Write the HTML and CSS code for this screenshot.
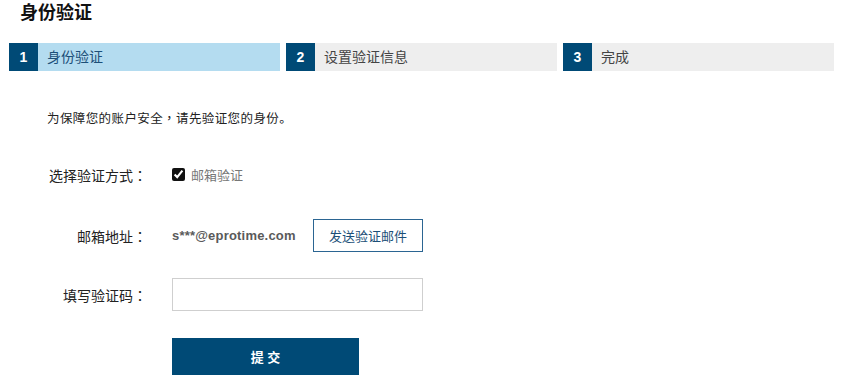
FILE: index.html
```html
<!DOCTYPE html>
<html lang="zh-CN">
<head>
  <meta charset="UTF-8" />
  <meta name="viewport" content="width=device-width, initial-scale=1.0"/>
  <title>身份验证</title>
  <link rel="stylesheet" href="styles.css">
</head>
<body>
  <h1 class="page-title">身份验证</h1>

  <div class="steps">
    <div class="step active"><span class="step-num">1</span><span class="step-name">身份验证</span></div>
    <div class="step"><span class="step-num">2</span><span class="step-name">设置验证信息</span></div>
    <div class="step"><span class="step-num">3</span><span class="step-name">完成</span></div>
  </div>

  <p class="intro">为保障您的账户安全<span class="punct" lang="zh-TW">，</span>请先验证您的身份。</p>

  <form class="verify-form" onsubmit="return false;">
    <div class="row first-row">
      <label class="row-label">选择验证方式<span class="punct" lang="zh-TW">：</span></label>
      <label class="check">
        <input type="checkbox" checked />
        <span>邮箱验证</span>
      </label>
    </div>
    <div class="row">
      <label class="row-label">邮箱地址<span class="punct" lang="zh-TW">：</span></label>
      <span class="email">s***@eprotime.com</span>
      <button type="button" class="send-btn">发送验证邮件</button>
    </div>
    <div class="row">
      <label class="row-label">填写验证码<span class="punct" lang="zh-TW">：</span></label>
      <input type="text" class="code-input" />
    </div>
    <div class="row submit-row">
      <span class="row-label"></span>
      <button type="submit" class="submit-btn">提 交</button>
    </div>
  </form>
</body>
</html>
```

FILE: styles.css
```css
* {
  box-sizing: border-box;
  margin: 0;
  padding: 0;
}

body {
  font-family: "Liberation Sans", "Noto Sans CJK SC", sans-serif;
  background-color: #fff;
  color: #222;
}

/* centred full-width punctuation */
.punct {
  font-family: "Noto Sans CJK TC", sans-serif;
}

.page-title {
  font-size: 18px;
  line-height: 26px;
  font-weight: bold;
  color: #111;
  padding-left: 20px;
}

.steps {
  display: flex;
  gap: 6px;
  margin: 17px 0 0 9px;
}

.step {
  display: flex;
  width: 271px;
  height: 28px;
  background-color: #eeeeee;
}

.step.active {
  background-color: #b4dcf0;
}

.step-num {
  width: 29px;
  background-color: #004a76;
  color: #fff;
  font-weight: bold;
  font-size: 14px;
  line-height: 28px;
  text-align: center;
}

.step-name {
  padding-left: 9px;
  font-size: 14px;
  line-height: 28px;
  color: #444;
}

.step.active .step-name {
  color: #1c4f78;
}

.intro {
  margin: 38px 0 0 47px;
  font-size: 12.5px;
  letter-spacing: 0.4px;
  line-height: 18px;
  color: #222;
}

.verify-form {
  margin-top: 32px;
  display: flex;
  flex-direction: column;
  gap: 26px;
}

.row {
  display: flex;
  align-items: center;
  height: 33px;
}

.first-row {
  height: 29px;
  margin-bottom: 4px;
}

.row-label {
  width: 147px;
  flex: none;
  text-align: right;
  font-size: 14px;
  color: #222;
  margin-right: 25px;
}

.check {
  display: flex;
  align-items: center;
  gap: 6px;
  font-size: 13px;
  color: #777;
}

.check input {
  width: 13px;
  height: 13px;
  margin: 0;
  accent-color: #111;
}

.email {
  font-size: 13px;
  font-weight: bold;
  color: #5a5a5a;
  letter-spacing: 0.2px;
  width: 141px;
}

.send-btn {
  width: 110px;
  height: 33px;
  background: #fff;
  border: 1px solid #2b6592;
  color: #1c4f78;
  font-family: inherit;
  font-size: 13px;
  cursor: pointer;
}

.code-input {
  width: 251px;
  height: 33px;
  border: 1px solid #cfcfcf;
  font-size: 13px;
  padding: 0 8px;
}

.submit-row {
  height: 37px;
  margin-top: 1px;
}

.submit-btn {
  width: 187px;
  height: 37px;
  border: none;
  background-color: #004a76;
  color: #fff;
  font-family: inherit;
  font-weight: bold;
  font-size: 13px;
  cursor: pointer;
}
```
